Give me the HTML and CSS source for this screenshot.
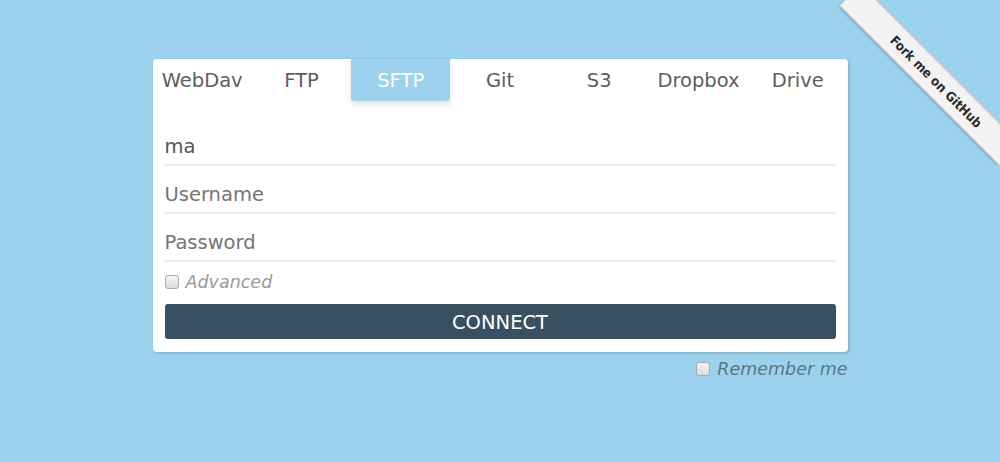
FILE: index.html
```html
<!DOCTYPE html>
<html>
<head>
<meta charset="utf-8">
<link rel="stylesheet" href="styles.css">
</head>
<body>
<div class="page">
  <div class="card">
    <nav class="tabs">
      <span class="tab">WebDav</span>
      <span class="tab">FTP</span>
      <span class="tab active">SFTP</span>
      <span class="tab">Git</span>
      <span class="tab">S3</span>
      <span class="tab">Dropbox</span>
      <span class="tab">Drive</span>
    </nav>
    <form class="form">
      <input class="field" type="text" value="ma">
      <input class="field" type="text" placeholder="Username">
      <input class="field" type="password" placeholder="Password">
      <label class="check advanced"><input type="checkbox" class="box"><span>Advanced</span></label>
      <button type="button" class="connect">CONNECT</button>
    </form>
  </div>
  <div class="remember">
    <label class="check"><input type="checkbox" class="box"><span>Remember me</span></label>
  </div>
</div>
<a class="ribbon-wrap" href="#"><span class="ribbon">Fork me on GitHub</span></a>
</body>
</html>
```

FILE: styles.css
```css
html, body {
  margin: 0;
  padding: 0;
}
body {
  background: #9cd2ed;
  font-family: "DejaVu Sans", sans-serif;
  height: 462px;
  overflow: hidden;
  position: relative;
}
.page {
  width: 695px;
  margin: 0 auto;
  padding-top: 59px;
}
.card {
  background: #fff;
  border-radius: 4px;
  box-shadow: 1px 1px 3px rgba(0, 0, 0, 0.22);
  padding-bottom: 13px;
}
.tabs {
  display: flex;
  height: 42px;
}
.tab {
  flex: 1 1 0;
  display: flex;
  align-items: center;
  justify-content: center;
  font-size: 19.5px;
  color: #5e5e5e;
  padding-top: 1px;
}
.tab.active {
  background: #9cd2ed;
  color: #fff;
  border-radius: 0 0 3px 3px;
  box-shadow: 0 3px 6px rgba(0, 0, 0, 0.12);
}
.form {
  display: flex;
  flex-direction: column;
  padding: 17px 12px 0;
}
.field {
  font-family: "DejaVu Sans", sans-serif;
  font-size: 19.5px;
  line-height: 23px;
  height: 48px;
  box-sizing: border-box;
  padding: 17px 0 6px;
  border: 0;
  border-bottom: 2px solid #eaedf0;
  outline: none;
  color: #555;
  background: transparent;
}
.field::placeholder {
  color: #757575;
}
.check {
  display: flex;
  align-items: center;
  gap: 7px;
  font-style: italic;
  font-size: 17.5px;
}
.advanced {
  height: 22px;
  margin-top: 9px;
  color: #9a9a9a;
}
.box {
  appearance: none;
  -webkit-appearance: none;
  margin: 0;
  width: 14px;
  height: 14px;
  box-sizing: border-box;
  border: 1px solid #a9a9a9;
  border-radius: 3px;
  background: linear-gradient(#f4f4f4, #dcdcdc);
}
.connect {
  margin-top: 11px;
  height: 35px;
  border: 0;
  border-radius: 3px;
  background: #38505f;
  color: #fff;
  font-family: "DejaVu Sans", sans-serif;
  font-size: 19.5px;
  padding: 1px 0 0;
}
.remember {
  display: flex;
  justify-content: flex-end;
  padding-top: 7px;
}
.remember .check {
  color: #587888;
  height: 20px;
}
.remember .box {
  margin-left: -1px;
}
.ribbon-wrap {
  position: absolute;
  top: 0;
  right: 0;
  width: 165px;
  height: 165px;
  overflow: hidden;
  text-decoration: none;
}
.ribbon {
  position: absolute;
  left: -20px;
  top: 65px;
  width: 240px;
  height: 30px;
  box-sizing: border-box;
  transform: rotate(45deg);
  background: #f3f3f3;
  border-top: 1px solid #d8d8d8;
  border-bottom: 1px solid #d0d0d0;
  box-shadow: 0 1px 3px rgba(0, 0, 0, 0.25);
  display: flex;
  align-items: center;
  justify-content: center;
  font-family: "DejaVu Sans Condensed", "DejaVu Sans", sans-serif;
  font-weight: bold;
  font-size: 13px;
  color: #2a2a2a;
  padding-left: 4px;
}
```
